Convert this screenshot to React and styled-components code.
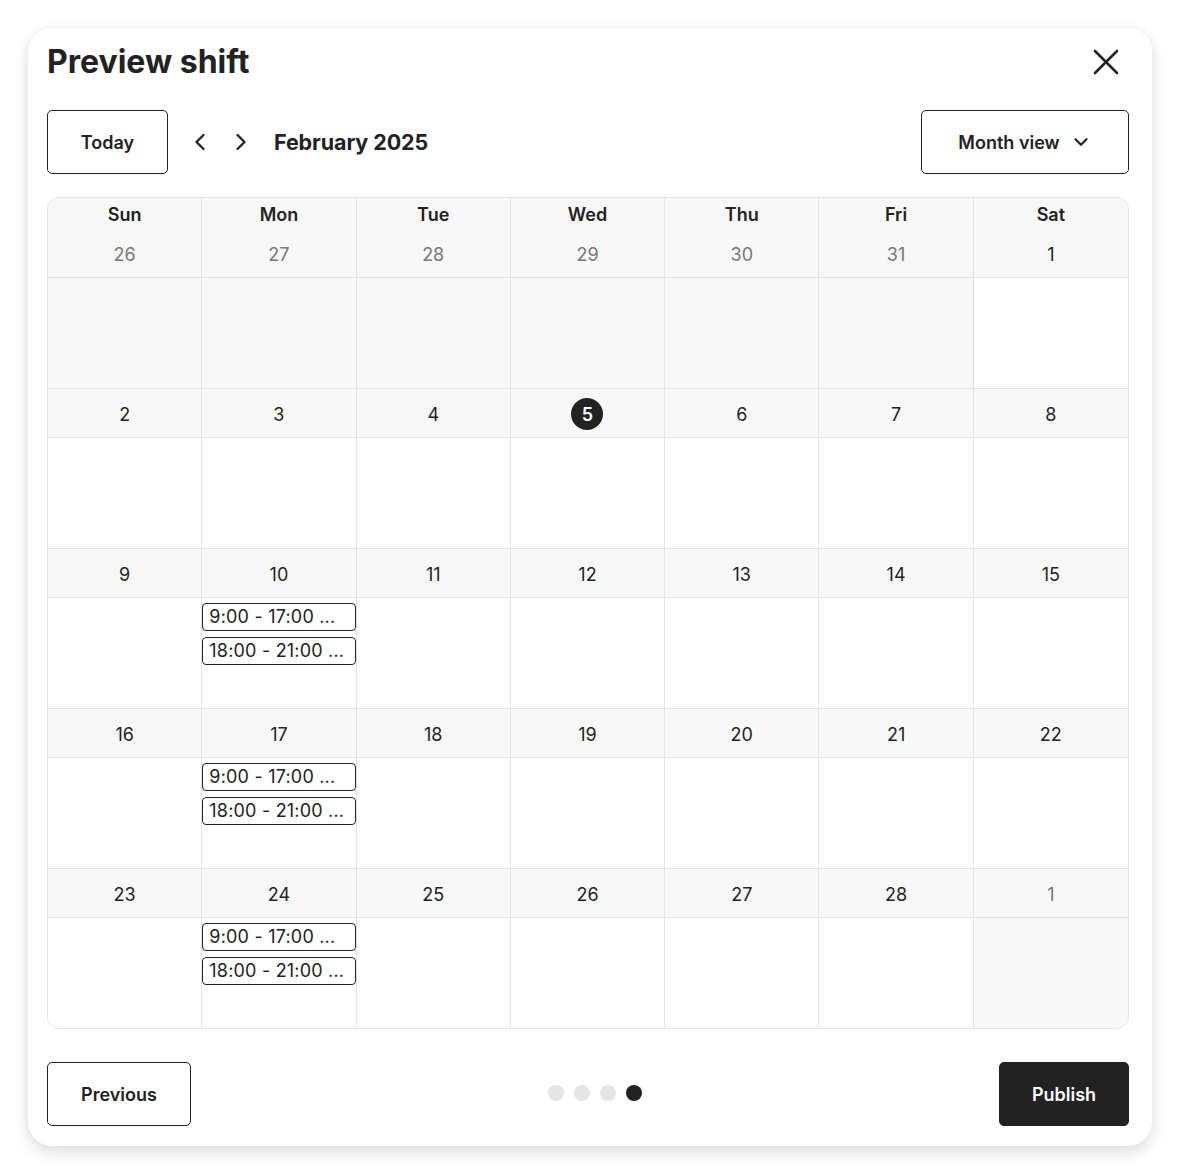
import React from 'react';
import styled, { createGlobalStyle } from 'styled-components';
import { ChevronLeft, ChevronRight, ChevronDown } from 'lucide-react';

const GlobalStyle = createGlobalStyle`
	body {
		margin: 0;
		background: #fff;
		font-family: Inter, "Noto Sans", sans-serif;
		color: #222;
	}
`

const Page = styled.div`
	padding: 28px;
`
const Card = styled.div`
	background: #fff;
	border-radius: 24px;
	box-shadow: 0 6px 16px rgba(0, 0, 0, 0.13), 0 0 10px rgba(0, 0, 0, 0.04);
	padding: 19px 23px 20px 19px;
`
const Header = styled.div`
	display: flex;
	align-items: center;
	justify-content: space-between;
	height: 30px;
	margin-bottom: 33px;
`
const Title = styled.h1`
	margin: 0;
	font-size: 32px;
	font-weight: 700;
	line-height: 30px;
`
const CloseButton = styled.button`
	display: flex;
	border: none;
	background: none;
	padding: 0;
	margin-right: 10px;
	color: #222;
	cursor: pointer;
`
const Toolbar = styled.div`
	display: flex;
	align-items: center;
	margin-bottom: 23px;
`
const OutlineButton = styled.button`
	display: flex;
	align-items: center;
	justify-content: center;
	gap: 10px;
	height: 64px;
	width: ${p => p.w}px;
	border: 1px solid #222;
	border-radius: 5px;
	background: ${p => p.dark ? '#222' : '#fff'};
	color: ${p => p.dark ? '#fff' : '#222'};
	font-family: inherit;
	font-size: 18px;
	font-weight: 600;
	padding: 0;
	margin-left: ${p => p.push ? 'auto' : '0'};
	cursor: pointer;
`
const NavArrows = styled.div`
	display: flex;
	align-items: center;
	gap: 13px;
	margin: 0 19px 0 18px;
	& > svg { cursor: pointer; }
`
const MonthLabel = styled.span`
	font-size: 21.5px;
	font-weight: 700;
	letter-spacing: -0.1px;
`
const Calendar = styled.div`
	display: grid;
	grid-template-columns: repeat(7, 1fr);
	border: 1px solid #e4e4e4;
	border-radius: 12px;
	overflow: hidden;
`
const Weekday = styled.div`
	height: 31px;
	display: flex;
	align-items: center;
	justify-content: center;
	padding-top: 1px;
	box-sizing: border-box;
	background: #f8f8f8;
	font-size: 18px;
	font-weight: 600;
	border-right: ${p => p.last ? 'none' : '1px solid #e4e4e4'};
`
const Day = styled.div`
	display: flex;
	flex-direction: column;
	min-width: 0;
	border-right: ${p => p.lastCol ? 'none' : '1px solid #e4e4e4'};
	border-bottom: ${p => p.lastRow ? 'none' : '1px solid #e4e4e4'};
`
const DateBar = styled.div`
	height: 49px;
	box-sizing: border-box;
	padding-top: 2px;
	display: flex;
	align-items: center;
	justify-content: center;
	background: #f8f8f8;
	border-bottom: 1px solid #e4e4e4;
	font-size: 18px;
	color: ${p => p.muted ? '#777' : '#222'};
`
const TodayMark = styled.span`
	width: 32px;
	height: 32px;
	border-radius: 50%;
	background: #222;
	color: #fff;
	font-weight: 600;
	display: flex;
	align-items: center;
	justify-content: center;
`
const DayBody = styled.div`
	height: 110px;
	box-sizing: border-box;
	padding-top: 5px;
	display: flex;
	flex-direction: column;
	gap: 6px;
	background: ${p => p.muted ? '#f8f8f8' : '#fff'};
`
const Shift = styled.div`
	height: 28px;
	box-sizing: border-box;
	border: 1px solid #222;
	border-radius: 4px;
	padding: 0 6px;
	font-size: 18px;
	letter-spacing: 0.2px;
	line-height: 26px;
	white-space: nowrap;
	overflow: hidden;
`
const Footer = styled.div`
	display: flex;
	align-items: center;
	justify-content: space-between;
	margin-top: 33px;
`
const Dots = styled.div`
	display: flex;
	gap: 10px;
	margin-top: -2px;
`
const Dot = styled.span`
	width: 16px;
	height: 16px;
	border-radius: 50%;
	background: ${p => p.active ? '#222' : '#e4e4e4'};
`

const CloseIcon = () => (
	<svg width='26' height='26' viewBox='0 0 26 26' fill='none' stroke='currentColor' strokeWidth='2.6' strokeLinecap='round'>
		<path d='M2 2 24 24M24 2 2 24' />
	</svg>
)

const weekdays = ['Sun', 'Mon', 'Tue', 'Wed', 'Thu', 'Fri', 'Sat'];
const shifts = ['9:00 - 17:00 ...', '18:00 - 21:00 ...'];

// dates from Jan 26 to Mar 1
const weeks = [];
for (let w = 0; w < 5; w++) {
	const row = [];
	for (let d = 0; d < 7; d++) {
		const n = w * 7 + d - 5;
		if (n < 1) row.push({ num: 31 + n, muted: true });
		else if (n > 28) row.push({ num: n - 28, muted: true });
		else row.push({ num: n, muted: false });
	}
	weeks.push(row);
}

export default function App() {
	return (
		<Page>
			<GlobalStyle />
			<Card>
				<Header>
					<Title>Preview shift</Title>
					<CloseButton><CloseIcon /></CloseButton>
				</Header>

				<Toolbar>
					<OutlineButton w={121}>Today</OutlineButton>
					<NavArrows>
						<ChevronLeft size={28} strokeWidth={2} />
						<ChevronRight size={28} strokeWidth={2} />
					</NavArrows>
					<MonthLabel>February 2025</MonthLabel>
					<OutlineButton w={208} push>
						Month view <ChevronDown size={22} strokeWidth={2.4} />
					</OutlineButton>
				</Toolbar>

				<Calendar>
					{weekdays.map((w, i) => <Weekday key={w} last={i === 6}>{w}</Weekday>)}
					{weeks.map((row, wi) => row.map((day, di) => (
						<Day key={wi + '-' + di} lastCol={di === 6} lastRow={wi === 4}>
							<DateBar muted={day.muted}>
								{!day.muted && day.num === 5 ? <TodayMark>5</TodayMark> : day.num}
							</DateBar>
							<DayBody muted={day.muted}>
								{di === 1 && wi >= 2 && shifts.map(s => <Shift key={s}>{s}</Shift>)}
							</DayBody>
						</Day>
					)))}
				</Calendar>

				<Footer>
					<OutlineButton w={144}>Previous</OutlineButton>
					<Dots>
						<Dot /><Dot /><Dot /><Dot active />
					</Dots>
					<OutlineButton w={130} dark>Publish</OutlineButton>
				</Footer>
			</Card>
		</Page>
	)
}
